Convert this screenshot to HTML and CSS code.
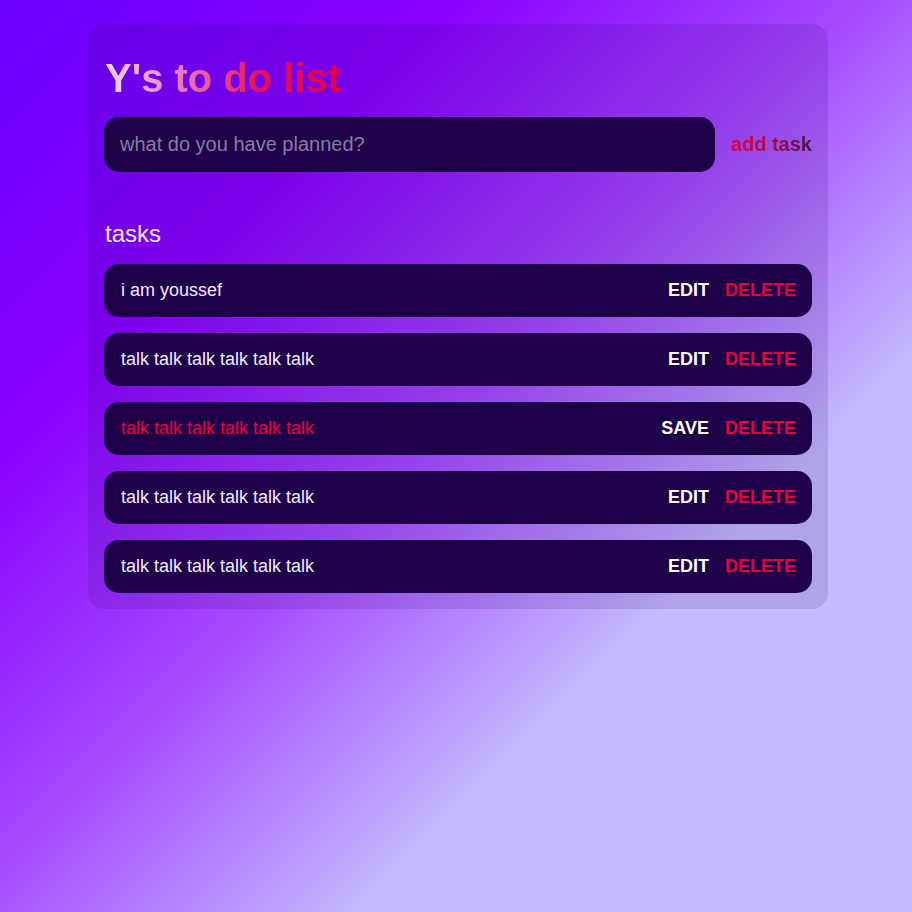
FILE: index.html
```html
<!DOCTYPE html>
<html lang="en">
<head>
<meta charset="utf-8">
<title>Y's to do list</title>
<link rel="stylesheet" href="styles.css">
</head>
<body>
<div class="app">
  <h1 class="title">Y's to do list</h1>
  <form class="new-task">
    <input class="new-task-input" type="text" placeholder="what do you have planned?">
    <button class="add-btn" type="button">add task</button>
  </form>
  <section class="task-list">
    <h2 class="tasks-heading">tasks</h2>
    <div class="tasks">
      <div class="task">
        <span class="task-text">i am youssef</span>
        <div class="actions"><button class="edit">EDIT</button><button class="delete">DELETE</button></div>
      </div>
      <div class="task">
        <span class="task-text">talk talk talk talk talk talk</span>
        <div class="actions"><button class="edit">EDIT</button><button class="delete">DELETE</button></div>
      </div>
      <div class="task">
        <span class="task-text editing">talk talk talk talk talk talk</span>
        <div class="actions"><button class="edit">SAVE</button><button class="delete">DELETE</button></div>
      </div>
      <div class="task">
        <span class="task-text">talk talk talk talk talk talk</span>
        <div class="actions"><button class="edit">EDIT</button><button class="delete">DELETE</button></div>
      </div>
      <div class="task">
        <span class="task-text">talk talk talk talk talk talk</span>
        <div class="actions"><button class="edit">EDIT</button><button class="delete">DELETE</button></div>
      </div>
    </div>
  </section>
</div>
</body>
</html>
```
FILE: styles.css
```css
* { box-sizing: border-box; }
html, body { height: 100%; }
body {
  margin: 0;
  font-family: "Liberation Sans", Arial, sans-serif;
  background: linear-gradient(135deg, #6a00ff 0%, #8a00ff 25%, #a64cff 48%, #c4bbfd 70%, #c3bafb 100%);
  min-height: 912px;
}
.app {
  width: 740px;
  margin: 0 0 0 88px;
  position: relative;
  top: 24px;
  padding: 14px 16px 16px;
  background: rgba(30, 0, 80, 0.12);
  border-radius: 16px;
}
.title {
  display: inline-block;
  margin: 18px 0 16px 1px;
  font-size: 40px;
  font-weight: 700;
  background: linear-gradient(to right, #ead6f4 0%, #e86ab0 38%, #e8105a 65%, #e8003c 100%);
  -webkit-background-clip: text;
  background-clip: text;
  color: transparent;
}
.new-task {
  display: flex;
  align-items: center;
  gap: 16px;
  margin: 0;
}
.new-task-input {
  flex: 1;
  height: 55px;
  border: none;
  outline: none;
  border-radius: 15px;
  background: #1e0049;
  padding: 0 16px;
  font-family: inherit;
  font-size: 20px;
  color: #f0e8ff;
}
.new-task-input::placeholder { color: #8a7aa6; }
.add-btn {
  border: none;
  background: linear-gradient(to right, #e8003c 0%, #b00c40 45%, #4a1450 100%);
  -webkit-background-clip: text;
  background-clip: text;
  color: transparent;
  font-family: inherit;
  font-size: 20px;
  font-weight: 700;
  padding: 0;
  cursor: pointer;
}
.task-list { margin-top: 48px; }
.tasks-heading {
  margin: 0 0 16px 1px;
  font-size: 24px;
  font-weight: 400;
  color: #f2eaff;
}
.tasks { display: flex; flex-direction: column; gap: 16px; }
.task {
  display: flex;
  align-items: center;
  justify-content: space-between;
  height: 53px;
  padding: 0 16px 0 17px;
  background: #1e0049;
  border-radius: 15px;
}
.task-text { font-size: 18px; color: #f2eaff; }
.task-text.editing { color: #e8003c; }
.actions { display: flex; gap: 16px; }
.actions button {
  border: none;
  background: none;
  padding: 0;
  font-family: inherit;
  font-size: 18px;
  font-weight: 700;
  cursor: pointer;
}
.edit { color: #ffffff; }
.delete { color: #e8003c; }
```
